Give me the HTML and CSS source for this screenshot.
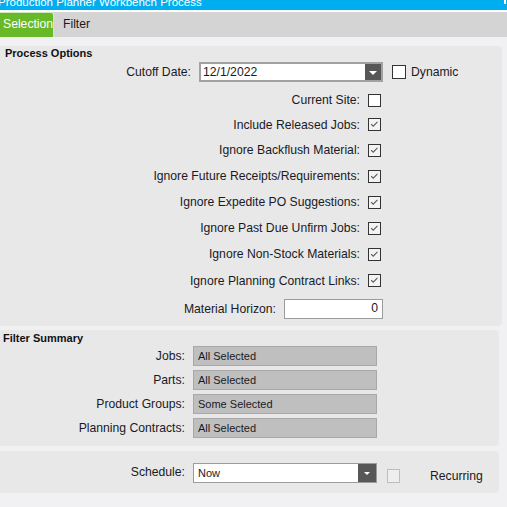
FILE: index.html
```html
<!DOCTYPE html>
<html>
<head>
<meta charset="utf-8">
<link rel="stylesheet" href="styles.css">
</head>
<body>
<div class="titlebar">
  <span class="title">Production Planner Workbench Process</span>
  <span class="winmark"></span>
</div>
<div class="tabbar">
  <div class="tab active">Selection</div>
  <div class="tab">Filter</div>
</div>
<div class="content">
  <section class="panel p1">
    <div class="ptitle t1">Process Options</div>
    <div class="row cutoff">
      <div class="main m1">
        <span class="lbl">Cutoff Date:</span>
        <div class="combo date"><span class="val">12/1/2022</span><span class="dd big"><span class="tri"></span></span></div>
      </div>
      <div class="dyn"><span class="cb white"></span><span class="lbl">Dynamic</span></div>
    </div>
    <div class="checks">
      <div class="row crow h24"><div class="main m1"><span class="lbl">Current Site:</span><span class="cb white"></span></div></div>
      <div class="row crow h25"><div class="main m1"><span class="lbl">Include Released Jobs:</span><span class="cb on"><svg viewBox="0 0 13 13" width="11" height="11"><path d="M2.5 6 L5 8.5 L10 3.5" fill="none" stroke="#5a5a5a" stroke-width="1.3"/></svg></span></div></div>
      <div class="row crow"><div class="main m1"><span class="lbl">Ignore Backflush Material:</span><span class="cb on"><svg viewBox="0 0 13 13" width="11" height="11"><path d="M2.5 6 L5 8.5 L10 3.5" fill="none" stroke="#5a5a5a" stroke-width="1.3"/></svg></span></div></div>
      <div class="row crow"><div class="main m1"><span class="lbl">Ignore Future Receipts/Requirements:</span><span class="cb on"><svg viewBox="0 0 13 13" width="11" height="11"><path d="M2.5 6 L5 8.5 L10 3.5" fill="none" stroke="#5a5a5a" stroke-width="1.3"/></svg></span></div></div>
      <div class="row crow"><div class="main m1"><span class="lbl">Ignore Expedite PO Suggestions:</span><span class="cb on"><svg viewBox="0 0 13 13" width="11" height="11"><path d="M2.5 6 L5 8.5 L10 3.5" fill="none" stroke="#5a5a5a" stroke-width="1.3"/></svg></span></div></div>
      <div class="row crow"><div class="main m1"><span class="lbl">Ignore Past Due Unfirm Jobs:</span><span class="cb on"><svg viewBox="0 0 13 13" width="11" height="11"><path d="M2.5 6 L5 8.5 L10 3.5" fill="none" stroke="#5a5a5a" stroke-width="1.3"/></svg></span></div></div>
      <div class="row crow"><div class="main m1"><span class="lbl">Ignore Non-Stock Materials:</span><span class="cb on"><svg viewBox="0 0 13 13" width="11" height="11"><path d="M2.5 6 L5 8.5 L10 3.5" fill="none" stroke="#5a5a5a" stroke-width="1.3"/></svg></span></div></div>
      <div class="row crow h27"><div class="main m1"><span class="lbl">Ignore Planning Contract Links:</span><span class="cb on"><svg viewBox="0 0 13 13" width="11" height="11"><path d="M2.5 6 L5 8.5 L10 3.5" fill="none" stroke="#5a5a5a" stroke-width="1.3"/></svg></span></div></div>
      <div class="row crow h30"><div class="main m1"><span class="lbl">Material Horizon:</span><div class="num">0</div></div></div>
    </div>
  </section>

  <section class="panel p2">
    <div class="ptitle t2">Filter Summary</div>
    <div class="frow"><div class="main m2"><span class="lbl">Jobs:</span><div class="field">All Selected</div></div></div>
    <div class="frow"><div class="main m2"><span class="lbl">Parts:</span><div class="field">All Selected</div></div></div>
    <div class="frow"><div class="main m2"><span class="lbl">Product Groups:</span><div class="field">Some Selected</div></div></div>
    <div class="frow"><div class="main m2"><span class="lbl">Planning Contracts:</span><div class="field">All Selected</div></div></div>
  </section>

  <section class="panel p3">
    <div class="srow">
      <div class="main m2"><span class="lbl">Schedule:</span><div class="combo sched"><span class="val small">Now</span><span class="dd sm"><span class="tri s"></span></span></div></div>
      <span class="cb dis"></span>
      <span class="lbl rec">Recurring</span>
    </div>
  </section>
</div>
</body>
</html>
```

FILE: styles.css
```css
* { box-sizing: border-box; }
html, body { margin: 0; padding: 0; }
body {
  width: 507px;
  height: 507px;
  overflow: hidden;
  background: #f1f1f3;
  font-family: "Liberation Sans", Arial, sans-serif;
  font-size: 12.2px;
  color: #1a1a26;
}
.titlebar {
  height: 10px;
  background: #00adef;
  overflow: hidden;
  display: flex;
  justify-content: space-between;
}
.title {
  display: block;
  color: #fff;
  font-size: 11.5px;
  line-height: 10px;
  margin-top: -3px;
  margin-left: -2px;
  white-space: nowrap;
}
.winmark {
  width: 2px;
  height: 4px;
  background: #fff;
  margin-right: 1px;
}
.tabbar {
  height: 27px;
  border-top: 2px solid #fff;
  background: #d4d4d4;
  display: flex;
  align-items: flex-end;
}
.tab {
  height: 25px;
  line-height: 24px;
  padding-left: 3px;
  color: #1a1a26;
}
.tab.active {
  width: 54px;
  background: #67b927;
  color: #fff;
  border-top: 1px solid #cfe9bd;
  border-right: 1px solid #cfe9bd;
  border-top-right-radius: 3px;
  margin-right: 6px;
  line-height: 22px;
}
.content {
  padding: 9px 5px 0 0;
}
.panel {
  background: #e8e8e8;
  border-radius: 0 4px 4px 0;
}
.p1 { height: 280px; }
.p2 { height: 116px; margin-top: 4px; margin-right: 3px; }
.p3 { height: 42px; margin-top: 5px; margin-right: 3px; padding-top: 11px; }
.ptitle { font-weight: bold; font-size: 11px; color: #111; }
.t1 { height: 14px; line-height: 14px; padding-left: 5px; }
.t2 { height: 16px; line-height: 16px; padding-left: 3px; }
.row { display: flex; align-items: center; }
.main { display: flex; align-items: center; justify-content: flex-end; gap: 8px; }
.m1 { width: 383px; }
.m2 { width: 377px; }
.cutoff { height: 20px; margin-top: 2px; }
.checks { margin-top: 6px; }
.crow { height: 26px; }
.h24 { height: 24px; }
.h25 { height: 25px; }
.h27 { height: 27px; }
.h30 { height: 30px; }
.lbl { white-space: nowrap; }
.combo {
  height: 20px;
  background: #fff;
  border: 1px solid #9c9c9c;
  display: flex;
  justify-content: space-between;
  align-items: stretch;
}
.combo.date { width: 184px; border-width: 2px; border-color: #a2a2a2; }
.combo.sched { width: 184px; }
.val { padding-left: 2px; line-height: 16px; }
.val.small { font-size: 11px; padding-left: 4px; line-height: 18px; }
.dd {
  background: #575757;
  display: flex;
  align-items: center;
  justify-content: center;
}
.dd.big { width: 16px; }
.dd.sm { width: 18px; }
.tri {
  width: 0; height: 0;
  border-left: 4px solid transparent;
  border-right: 4px solid transparent;
  border-top: 4px solid #fff;
  margin-top: 1px;
}
.tri.s {
  border-left-width: 3px;
  border-right-width: 3px;
  border-top-width: 3px;
}
.cb {
  width: 13px;
  height: 13px;
  border: 1px solid #333;
  background: #fff;
  display: inline-flex;
  align-items: center;
  justify-content: center;
  flex: none;
}
.m1 .cb { margin-right: 2px; }
.cb.on { background: #f3f3f3; }
.dyn { display: flex; align-items: center; gap: 5px; margin-left: 9px; }
.dyn .cb { width: 14px; height: 14px; }
.num {
  width: 99px;
  height: 20px;
  background: #fff;
  border: 1px solid #9c9c9c;
  text-align: right;
  padding-right: 4px;
  line-height: 17px;
}
.frow { height: 20px; margin-bottom: 4px; display: flex; }
.frow .lbl { line-height: 20px; }
.field {
  width: 184px;
  height: 20px;
  background: #bfbfbf;
  border: 1px solid #a8a8a8;
  font-size: 11px;
  line-height: 18px;
  padding-left: 4px;
}
.p2 .frow:last-child { margin-bottom: 0; }
.srow { display: flex; align-items: flex-start; }
.srow .lbl { line-height: 21px; }
.cb.dis {
  margin-left: 10px;
  margin-top: 7px;
  width: 13px;
  height: 14px;
  border-color: #bdbdbd;
  background: #eeeeee;
}
.lbl.rec { margin-left: 30px; margin-top: 4px; }
```
